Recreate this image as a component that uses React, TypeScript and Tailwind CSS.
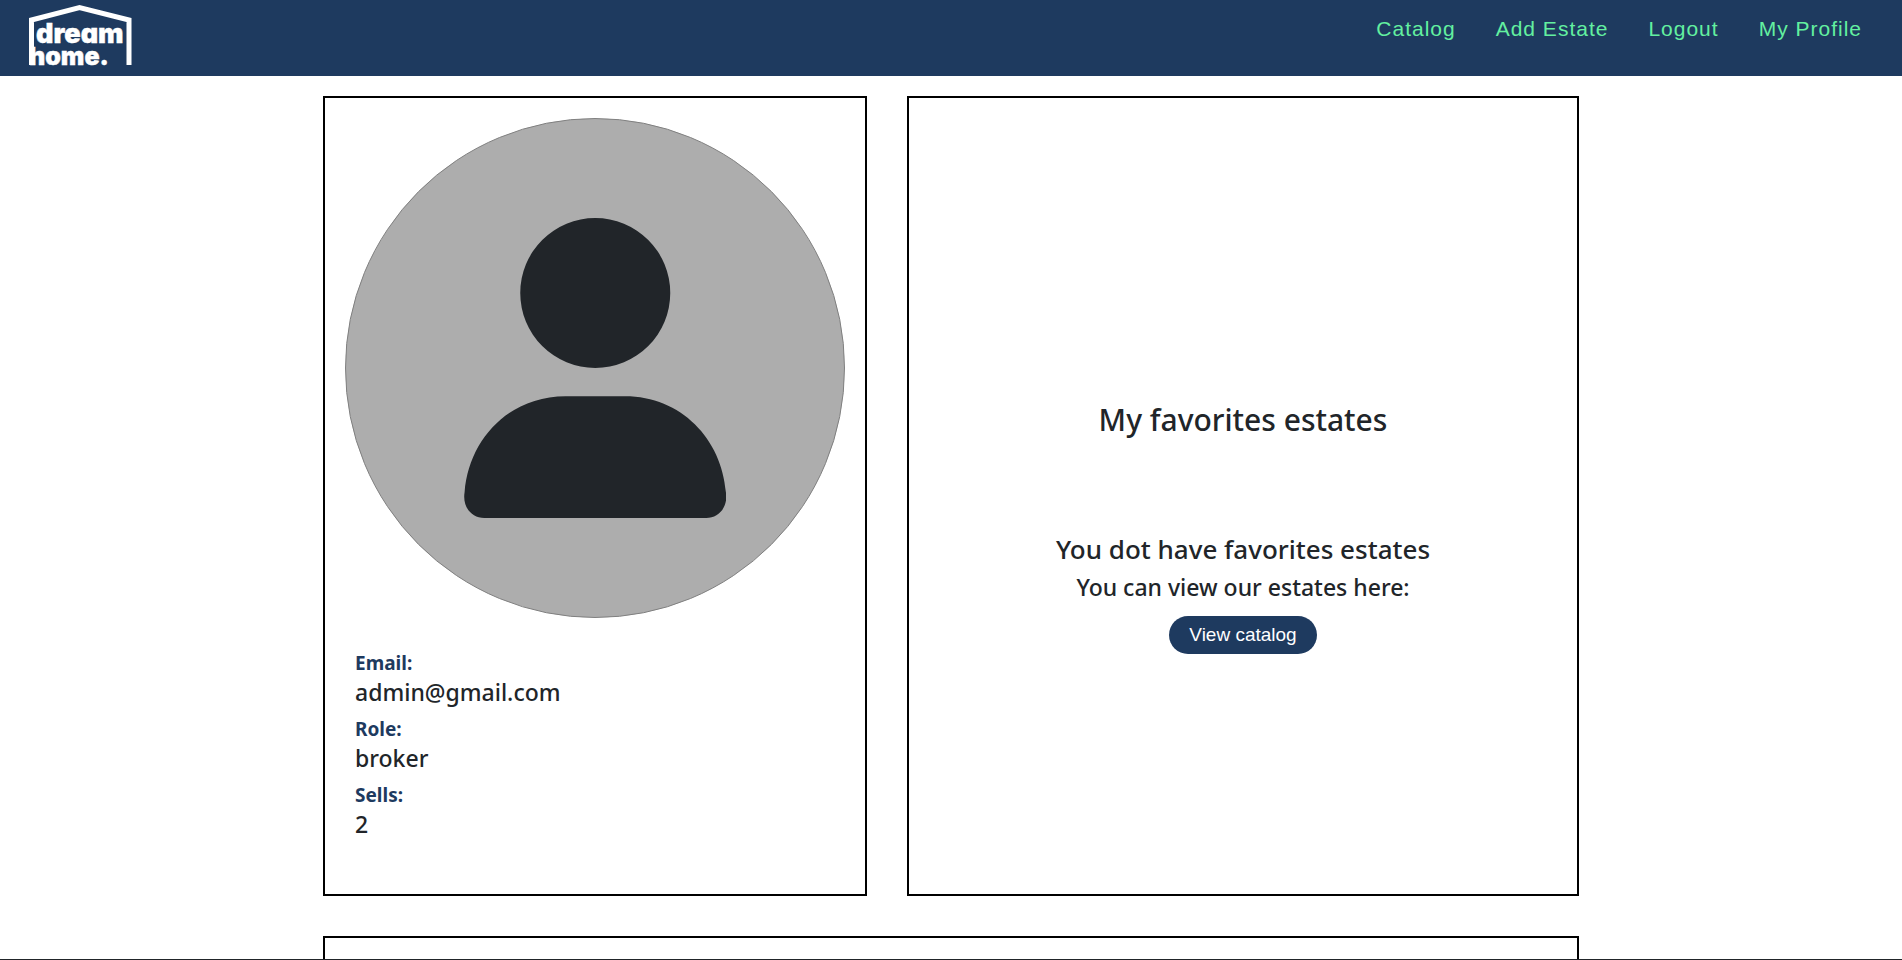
const navLinks = ["Catalog", "Add Estate", "Logout", "My Profile"];

const details = [
  { label: "Email:", value: "admin@gmail.com" },
  { label: "Role:", value: "broker" },
  { label: "Sells:", value: "2" },
];

function Logo() {
  return (
    <svg width="108" height="70" viewBox="0 0 108 70" role="img" aria-label="dream home." className="block">
      <path d="M3.5 61V16L51.5 3.5L101 16V61" fill="none" stroke="#fff" strokeWidth="5" />
      <g
        className="font-['Inter',sans-serif] [font-feature-settings:'cv11']"
        fill="#fff"
        stroke="#fff"
        strokeWidth="0.4"
        fontWeight="900"
      >
        <text x="8" y="39" fontSize="27">
          dream
        </text>
        <text x="1" y="61" fontSize="25">
          home.
        </text>
      </g>
    </svg>
  );
}

function UserIcon() {
  return (
    <svg viewBox="0 0 448 512" className="h-[300px]" fill="currentColor" aria-hidden="true">
      <path d="M224 256A128 128 0 1 0 224 0a128 128 0 1 0 0 256zM274.7 304H173.3C77.6 304 8 377 1 468C-3 492 12 512 34.7 512h378.6C436 512 451 492 447 468C440 377 370.4 304 274.7 304z" />
    </svg>
  );
}

export default function App() {
  return (
    <div className="flex min-h-screen flex-col bg-white font-['Noto_Sans',sans-serif] text-[#212529]">
      <header className="flex h-[76px] items-start justify-between bg-[#1e3a5f] pr-10 pl-7">
        <a href="#home" className="pt-1">
          <Logo />
        </a>
        <nav className="flex gap-10 pt-4 font-['Liberation_Sans',sans-serif] text-[21px] leading-[26px] tracking-[1px] text-[#63f0a0]">
          {navLinks.map((name) => (
            <a key={name} href="#top">
              {name}
            </a>
          ))}
        </nav>
      </header>

      <main className="mx-auto flex w-full max-w-[1256px] flex-1 flex-col gap-10 pt-5">
        <div className="flex min-h-[800px] gap-10">
          <section className="w-[544px] shrink-0 border-2 border-black p-5">
            <div className="flex aspect-square items-center justify-center rounded-full border border-[#808080] bg-[#adadad]">
              <UserIcon />
            </div>
            <dl className="flex flex-col gap-2 px-2.5 pt-[31px]">
              {details.map(({ label, value }) => (
                <div key={label}>
                  <dt className="text-[19px] leading-7 font-bold text-[#1e3a5f]">{label}</dt>
                  <dd className="text-[23px] leading-[30px] font-medium">{value}</dd>
                </div>
              ))}
            </dl>
          </section>

          <section className="flex flex-1 flex-col items-center justify-center border-2 border-black pt-[62px] text-center font-medium">
            <h2 className="pb-[94px] text-[30px] leading-[38px]">My favorites estates</h2>
            <h3 className="pb-2 text-[26px] leading-[32px]">You dot have favorites estates</h3>
            <h4 className="pb-3.5 text-[23px] leading-[29px]">You can view our estates here:</h4>
            <button className="rounded-full bg-[#1e3a5f] px-5 py-1.5 font-['Liberation_Sans',sans-serif] text-[19px] leading-[26px] font-normal text-white">
              View catalog
            </button>
          </section>
        </div>

        <section className="flex-1 border-2 border-b-0 border-black" />
      </main>

      <footer className="border-t border-[#212529]" />
    </div>
  );
}
